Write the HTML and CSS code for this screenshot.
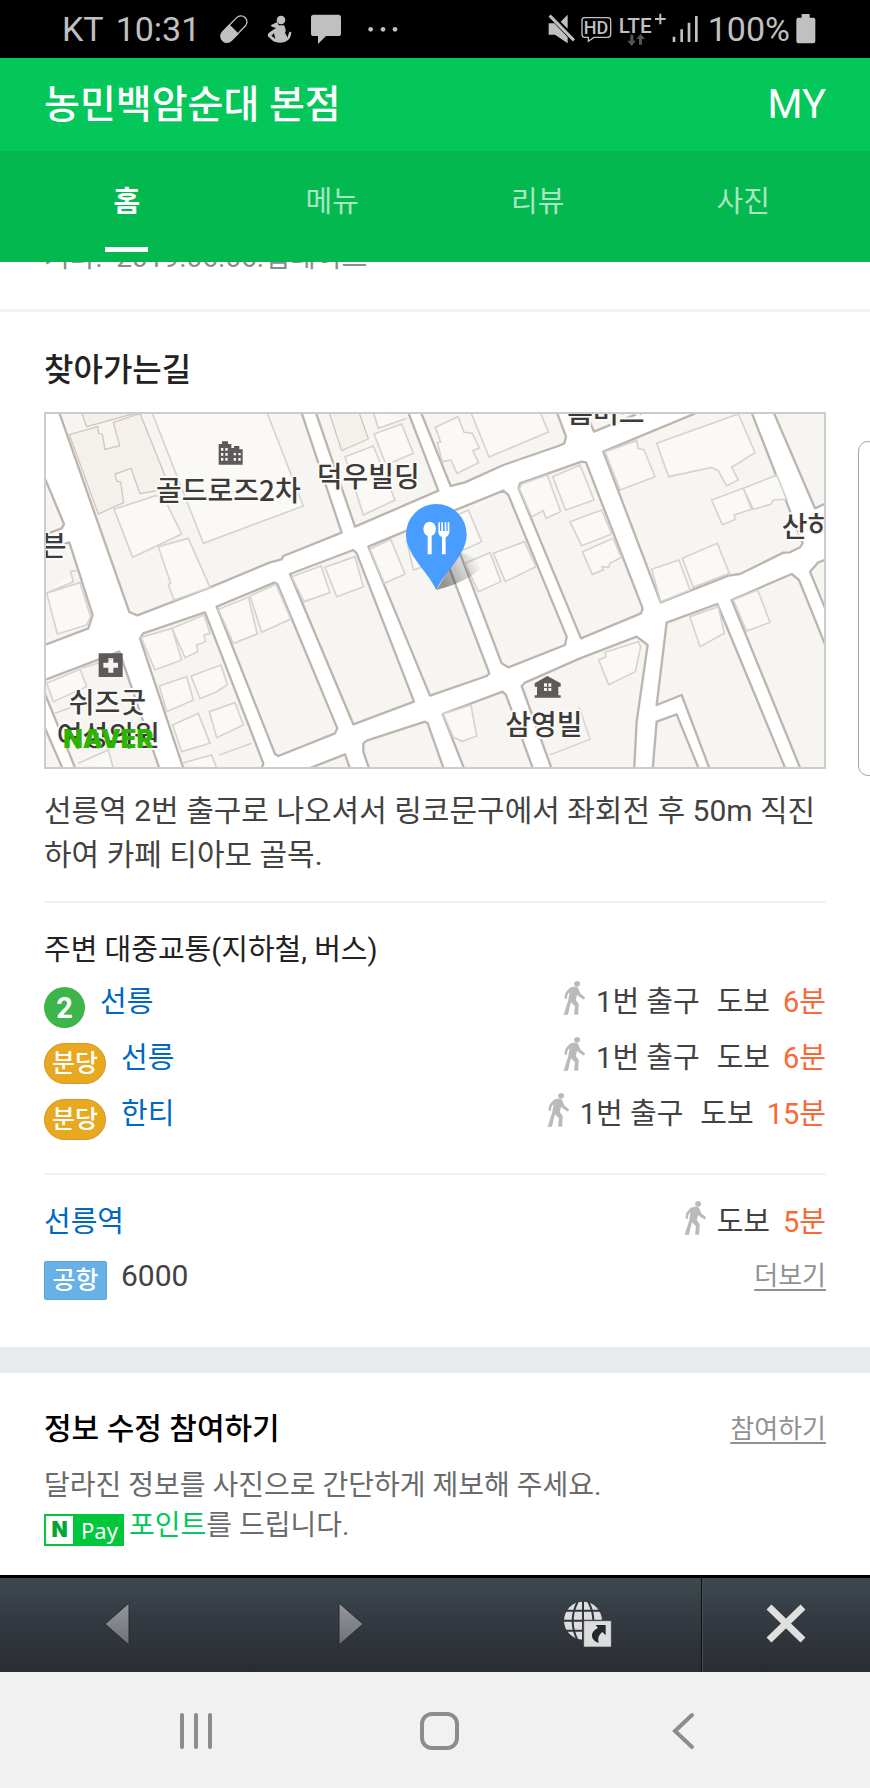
FILE: index.html
```
<!DOCTYPE html>
<html lang="ko">
<head>
  <meta charset="utf-8">
  <meta name="viewport" content="width=device-width, initial-scale=1">
  <title>농민백암순대 본점</title>
  <link rel="stylesheet" href="styles.css">
</head>
<body>
  <svg class="defs" aria-hidden="true">
    <symbol id="walk" viewBox="385 632 70 108">
      <circle cx="428" cy="643" r="9"/>
      <path d="M405 655L420 651Q430 651 433 660L438 672L452 684L449 691L432 681L428 676L424 692L433 705L431 737H419L421 710L409 699L400 737H387L401 693L405 668L399 675L396 690L389 687L392 671Z"/>
    </symbol>
  </svg>

  <div class="status">
    <span class="carrier">KT</span>
    <span class="clock">10:31</span>
    <svg class="pill" width="30" height="30" viewBox="657 42 90 90"><g transform="rotate(-46 702 87)"><rect x="654" y="69" width="96" height="36" rx="18" fill="none" stroke="#c0c0c0" stroke-width="4"/><path fill="#c0c0c0" d="M702 67H672a20 20 0 0 0 0 40H702Z"/></g></svg>
    <svg class="person" width="26" height="30" viewBox="803 42 78 90"><circle cx="845" cy="60" r="13" fill="#c0c0c0"/><path d="M814 76L834 66L838 76L854 76Q862 90 857 99Q862 105 864 113L870 95L876 96Q876 118 858 125Q840 132 822 124L805 108Q804 101 812 96L830 84L818 80ZM824 100L816 107L828 116Z" fill="#c0c0c0" fill-rule="evenodd"/></svg>
    <svg class="bubble" width="30" height="30" viewBox="932 45 90 90"><path fill="#c0c0c0" d="M940 47H1014Q1022 47 1022 55V104Q1022 111 1014 111H977L953 135V111H940Q932 111 932 104V55Q932 47 940 47Z"/></svg>
    <svg class="more" width="32" height="30" viewBox="1103 42 96 90"><g fill="#c0c0c0"><circle cx="1114" cy="88" r="7"/><circle cx="1151" cy="88" r="7"/><circle cx="1187" cy="88" r="7"/></g></svg>
    <div class="status-right">
      <svg width="27" height="30" viewBox="341 42 81 90"><path fill="#c0c0c0" d="M343 70H360L400 112V130L362 104H343ZM379 65L400 44V86Z"/><path d="M346 47L419 121" stroke="#c0c0c0" stroke-width="9"/></svg>
      <svg width="31" height="30" viewBox="440 42 93 90"><path d="M451 53H520Q529 53 529 61V103Q529 112 520 112H479L462 124V112H451Q443 112 443 103V61Q443 53 451 53Z" fill="none" stroke="#c0c0c0" stroke-width="4"/><text x="448" y="103" class="hd">HD</text></svg>
      <svg width="48" height="34" viewBox="546 32 144 102"><text x="548" y="94" class="lte">LTE</text><path d="M673 37V69M657 53H689" stroke="#c0c0c0" stroke-width="6"/><path fill="#555" d="M583 100H592V118H600L587 134L574 118H583ZM609 130H618V113H627L614 98L601 113H609Z"/></svg>
      <svg width="26" height="30" viewBox="708 46 78 90"><path d="M714 114V130M737 92V130M759 72V130M781 52V130" stroke="#c0c0c0" stroke-width="8"/></svg>
      <span class="percent">100%</span>
      <svg width="20" height="30" viewBox="1085 43 60 90"><path fill="#c0c0c0" d="M1102 43H1126V54H1137Q1143 54 1143 60V125Q1143 131 1137 131H1092Q1086 131 1086 125V60Q1086 54 1092 54H1102Z"/></svg>
    </div>
  </div>

  <header class="header">
    <h1>농민백암순대 본점</h1>
    <a href="#" class="my">MY</a>
  </header>
  <nav class="tabs">
    <a href="#" class="tab on">홈</a>
    <a href="#" class="tab">메뉴</a>
    <a href="#" class="tab">리뷰</a>
    <a href="#" class="tab">사진</a>
  </nav>

  <main>
    <div class="updated"><p>기타:&nbsp; 2019.06.06.업데이트</p></div>

    <section class="way">
      <h2>찾아가는길</h2>
      <a href="#" class="map" aria-label="지도">
        <svg viewBox="48 42 2334 1058">
          <rect x="40" y="30" width="2360" height="1090" fill="#fff"/>
          <!-- blocks between the roads -->
          <g fill="#f6f5f1" stroke="#bdb5af" stroke-width="7" stroke-linejoin="round">
            <path d="M30 200L102 372L95 385L30 410Z"/>
            <path d="M30 455L118 427L188 645L175 685L30 740Z"/>
            <path d="M85 30L298 636L322 646L540 562L720 487L755 478L760 468L935 398L812 30Z"/>
            <path d="M855 30L975 380L1225 272L1132 30Z"/>
            <path d="M1170 30L1262 258L1305 247L1420 195L1585 138L1603 130L1608 110L1578 30Z"/>
            <path d="M1665 30L1692 95L1850 30Z"/>
            <path d="M1720 155L2020 30H2162L2318 430L2310 442L2280 457L2260 458L2130 522L2095 527L1892 607Z"/>
            <path d="M2228 30L2355 325L2400 305V30Z"/>
            <path d="M1015 440L1130 392L1240 345L1260 510L1378 820L1370 828L1200 887Z"/>
            <path d="M1240 345L1420 272L1435 285L1610 710L1605 735L1435 802L1415 790L1290 460Z"/>
            <path d="M1470 250L1655 185L1668 187L1838 625L1833 640L1653 715L1466 265Z"/>
            <path d="M780 522L970 450L980 460L1152 905L970 973Z"/>
            <path d="M560 620L733 548L742 552L922 985L915 1000L745 1068L735 1062Z"/>
            <path d="M330 715L340 700L525 637L700 1090L690 1120H465Z"/>
            <path d="M30 845L268 755L393 1120H142Z"/>
            <path d="M30 950L104 1120H30Z"/>
            <path d="M800 1120L945 1063L965 1120Z"/>
            <path d="M1000 1030L1010 1022L1185 965L1193 970L1246 1120H1022L1000 1055Z"/>
            <path d="M1238 942L1418 875L1428 885L1514 1120H1308Z"/>
            <path d="M1475 858L1485 848L1650 775L1820 710L1853 735L1820 965L1812 1120H1570Z"/>
            <path d="M1910 668L2062 612L2272 1120H2044L1955 885L1880 915Z"/>
            <path d="M1880 965L1940 943L2012 1120H1867Z"/>
            <path d="M2105 600L2285 522L2307 540L2400 770V1120H2317Z"/>
            <path d="M2340 515L2365 487L2400 474V660Z"/>
          </g>
          <g fill="#f4f0ec" stroke="#d3c6bf" stroke-width="4">
            <path d="M118 104L203 80L206 100L217 103L225 148L269 137L250 68L330 40L420 265L330 281L303 205L255 222L260 243L272 246L281 308L205 342Z"/>
            <path d="M152 30L170 80L315 40M895 30L935 152L1015 117L985 30Z"/>
          </g>
          <!-- buildings -->
          <g fill="#faf9f6" stroke="#d6d4d1" stroke-width="5">
            <path d="M365 35L520 430L820 318L710 35Z"/>
            <path d="M252 328L377 287L402 294L455 402L308 472Z"/>
            <path d="M385 440L475 415L540 562L432 600L415 553L422 550Z"/>
            <path d="M46 580L130 545L122 515L140 512M50 580L150 548L182 650L170 675L82 702Z"/>
            <path d="M945 170L1030 138L1095 300L1000 345ZM1032 102L1115 72L1150 160L1068 195ZM1028 30L1045 85L1130 55"/>
            <path d="M1216 82L1284 50L1302 97L1327 100L1348 144L1328 152L1346 188L1281 220L1263 180L1237 185L1222 128L1232 126Z"/>
            <path d="M1320 30L1377 171L1555 96L1528 30Z"/>
            <path d="M333 712L426 685L455 780L375 810ZM426 685L522 645L540 700L522 705L526 725L500 735L503 755L465 773Z"/>
            <path d="M388 858L470 830L490 900L410 935ZM483 828L573 795L592 854L560 875L510 896ZM428 975L505 940L540 1030L455 1055ZM538 935L615 908L640 975L560 1013ZM455 1090L545 1065L560 1105M568 1065L665 1030"/>
            <path d="M50 850L150 808L170 860L70 905ZM155 805L265 770M75 940L185 900M145 1090L235 1050L250 1105"/>
            <path d="M565 628L655 592L682 702L610 730ZM660 588L738 553L782 657L695 697Z"/>
            <path d="M785 530L873 498L900 578L822 605ZM885 502L975 470L1000 560L920 590Z"/>
            <path d="M1020 447L1082 418L1125 522L1063 550ZM1130 420L1150 510L1180 500M1270 350L1315 330L1355 425L1300 450Z"/>
            <path d="M1305 490L1380 458L1413 545L1345 575ZM1390 460L1483 425L1518 500L1426 545Z"/>
            <path d="M1475 252L1552 225L1592 335L1548 355L1540 332L1505 350L1468 265ZM1568 230L1650 195L1692 300L1607 330ZM1620 365L1715 330L1745 402L1655 437ZM1657 455L1750 415L1774 472L1740 490L1736 502L1716 500L1720 510L1687 523Z"/>
            <path d="M1725 155L1820 122L1824 145L1842 150L1875 230L1770 270ZM1880 130L2125 42L2175 158L2105 202L2125 240L2090 258L2065 212L2045 202L1916 230Z"/>
            <path d="M2045 300L2140 265L2165 328L2112 345L2117 358L2077 374ZM2140 265L2240 225L2270 298L2230 300L2222 313L2170 328ZM1865 508L1947 480L1980 570L1892 605ZM1957 475L2062 430L2098 520L1990 562Z"/>
            <path d="M1706 780L1728 770L1725 757L1825 725L1832 740L1816 815L1736 854ZM1980 650L2065 620L2083 700L2010 740ZM2110 600L2183 570L2220 667L2150 693ZM1240 942L1323 915L1340 1008L1297 1024L1270 1012Z"/>
          </g>
          <path d="M1560 1065L1680 1018L1648 922" fill="none" stroke="#dccfc8" stroke-width="4"/>

          <!-- places -->
          <g fill="#5c5a5a">
            <path fill-rule="evenodd" d="M566 132H576V124H594V132H604V144H612V138H628V148H638V194H566ZM573 144V152H580V144ZM586 144V152H593V144ZM573 159V167H580V159ZM586 159V167H593V159ZM573 174V182H580V174ZM586 174V182H593V174ZM611 159V166H618V159ZM625 159V166H632V159ZM611 174V182H618V174ZM625 174V182H632V174Z"/>
            <path fill-rule="evenodd" d="M206 760H278V831H206ZM235 774V788H220V803H235V818H250V803H264V788H250V774Z"/>
            <path fill-rule="evenodd" d="M1552 828L1592 850V860H1585V886H1592V893H1514V886H1521V860H1514V850ZM1542 850V860H1551V850ZM1555 850V860H1564V850ZM1542 864V873H1551V864ZM1555 864V873H1564V864Z"/>
          </g>
          <g class="place">
            <text x="378" y="304">골드로즈2차</text>
            <text x="860" y="262">덕우빌딩</text>
            <text x="32" y="467">븐</text>
            <text x="116" y="940">쉬즈굿</text>
            <text x="80" y="1039">여성의원</text>
            <text x="1426" y="1006">삼영빌</text>
            <text x="2255" y="411">산하</text>
            <text x="1612" y="70">홈버스</text>
          </g>
          <text x="100" y="1045" class="naver">NAVER</text>

          <!-- pin -->
          <defs><linearGradient id="shade" gradientUnits="userSpaceOnUse" x1="1240" y1="550" x2="1350" y2="485"><stop offset="0" stop-color="#000" stop-opacity=".4"/><stop offset="1" stop-color="#000" stop-opacity="0"/></linearGradient></defs>
          <path d="M1219 570L1290 455L1370 490Q1320 545 1219 570Z" fill="url(#shade)"/>
          <path d="M1219 570C1190 510 1128 465 1128 403A91 91 0 0 1 1310 403C1310 465 1248 510 1219 570Z" fill="#489dff"/>
          <g fill="#fff"><ellipse cx="1199" cy="387" rx="19" ry="22"/><path d="M1193 400H1205V463H1193ZM1225 367H1230V393H1234V367H1239V393H1244V367H1249V393H1253V367H1258V395Q1258 407 1247 411V463H1236V411Q1225 407 1225 395Z"/></g>
        </svg>
      </a>
      <p class="guide">선릉역 2번 출구로 나오셔서 링코문구에서 좌회전 후 50m 직진하여 카페 티아모 골목.</p>

      <div class="transit">
        <h3>주변 대중교통(지하철, 버스)</h3>
        <ul>
          <li><span class="line line2">2</span><a href="#">선릉</a><span class="walk"><svg><use href="#walk"/></svg><span>1번 출구</span><span>도보</span><em>6분</em></span></li>
          <li><span class="line bundang">분당</span><a href="#">선릉</a><span class="walk"><svg><use href="#walk"/></svg><span>1번 출구</span><span>도보</span><em>6분</em></span></li>
          <li><span class="line bundang">분당</span><a href="#">한티</a><span class="walk"><svg><use href="#walk"/></svg><span>1번 출구</span><span>도보</span><em>15분</em></span></li>
        </ul>
      </div>

      <div class="bus">
        <div class="stop"><a href="#">선릉역</a><span class="walk"><svg><use href="#walk"/></svg><span>도보</span><em>5분</em></span></div>
        <div class="route"><span class="airport">공항</span><span class="number">6000</span><a href="#" class="link">더보기</a></div>
      </div>
    </section>

    <section class="edit">
      <div class="edit-head"><h2>정보 수정 참여하기</h2><a href="#" class="link">참여하기</a></div>
      <p>달라진 정보를 사진으로 간단하게 제보해 주세요.</p>
      <p class="point"><span class="npay"><b>N</b><span>Pay</span></span><span><strong>포인트</strong>를 드립니다.</span></p>
    </section>
  </main>

  <div class="toolbar">
    <button aria-label="뒤로"><svg width="30" height="50" viewBox="0 0 30 50"><path d="M27 3V45L3 24Z" fill="url(#metal)" stroke="#262b30"/></svg></button>
    <button aria-label="앞으로"><svg width="30" height="50" viewBox="0 0 30 50"><defs><linearGradient id="metal" x2="0" y2="1"><stop stop-color="#95999d"/><stop offset="1" stop-color="#6d7175"/></linearGradient></defs><path d="M3 3V45L27 24Z" fill="url(#metal)" stroke="#262b30"/></svg></button>
    <button aria-label="브라우저로 열기">
      <svg width="50" height="50" viewBox="373 119 150 150" overflow="visible">
        <circle cx="445" cy="181" r="57" fill="#ddd"/>
        <path d="M445 122V240M387 181H503M394 151H496M394 211H496M429 124Q399 181 429 240M461 124Q491 181 461 240" fill="none" stroke="#30363c" stroke-width="6"/>
        <path d="M447 181H530V260H447Z" fill="#ddd" stroke="#30363c" stroke-width="2"/>
        <path d="M483 194H513V225L503 215Q487 226 492 248Q469 240 472 222Q475 210 490 203Z" fill="#22292e"/>
      </svg>
    </button>
    <button class="close" aria-label="닫기"><svg width="42" height="42" viewBox="0 0 42 42"><path d="M4 3L38 36M38 3L4 36" stroke="#e0e0e0" stroke-width="7"/></svg></button>
  </div>
  <div class="softkeys">
    <button aria-label="최근 앱"><svg width="40" height="40" viewBox="0 0 40 40"><path d="M6 5V37M20 5V37M34 5V37"/></svg></button>
    <button aria-label="홈 화면"><svg width="42" height="42" viewBox="0 0 42 42"><rect x="3" y="5" width="35" height="34" rx="10"/></svg></button>
    <button aria-label="이전"><svg width="24" height="40" viewBox="0 0 24 40"><path d="M20 5L3 21L20 37"/></svg></button>
  </div>
  <div class="edge"></div>
</body>
</html>
```
FILE: styles.css
```
* {
  box-sizing: border-box;
}
body {
  position: relative;
  margin: 0;
  min-height: 100vh;
  display: flex;
  flex-direction: column;
  overflow-x: hidden;
  background: #fff;
  color: #424242;
  font: 30px/44px Roboto, "Noto Sans CJK KR", sans-serif;
}
h1, h2, h3, p, ul {
  margin: 0;
  padding: 0;
}
ul {
  list-style: none;
}
a {
  color: #0068c3;
  text-decoration: none;
}
svg {
  display: block;
}
button {
  display: flex;
  align-items: center;
  justify-content: center;
  padding: 0;
  border: 0;
  background: none;
}
.defs {
  position: absolute;
  width: 0;
  height: 0;
}

/* phone status bar */
.status {
  display: flex;
  align-items: center;
  height: 58px;
  padding: 0 54px 0 62px;
  background: #000;
  color: #c0c0c0;
  font-size: 34px;
}
.clock {
  margin: 0 19px 0 12px;
}
.person {
  margin: 0 18px;
}
.more {
  margin-left: 26px;
}
.status-right {
  display: flex;
  align-items: center;
  gap: 6px;
  margin-left: auto;
}
.percent {
  margin-left: 4px;
}
.hd {
  font: 500 54px Roboto, sans-serif;
  fill: #c0c0c0;
}
.lte {
  font: 500 62px Roboto, sans-serif;
  fill: #c0c0c0;
}

.header {
  display: flex;
  align-items: center;
  justify-content: space-between;
  height: 93px;
  padding: 0 44px;
  background: #04c75a;
}
h1 {
  color: #fff;
  font-size: 39px;
  font-weight: 500;
}
.my {
  color: #fff;
  font-size: 40px;
}
.tabs {
  display: flex;
  height: 111px;
  padding: 0 24px;
  background: #04b850;
}
.tab {
  flex: 1;
  display: flex;
  flex-direction: column;
  align-items: center;
  padding-top: 29px;
  color: rgba(255, 255, 255, .66);
  font-size: 29px;
}
.tab.on {
  color: #fff;
  font-weight: 700;
}
.tab.on::after {
  content: "";
  width: 43px;
  height: 5px;
  margin-top: 23px;
  background: #fff;
}

main {
  flex: 1;
}
/* last line of the block that is scrolled under the tabs */
.updated {
  display: flex;
  align-items: flex-end;
  height: 50px;
  padding: 0 44px 29px;
  overflow: hidden;
  border-bottom: 3px solid #f2f2f2;
  color: #8c8c8c;
  font-size: 28px;
}
.way {
  padding: 36px 44px 47px;
}
h2 {
  color: #222;
  font-size: 32px;
  font-weight: 500;
}
.map {
  display: block;
  margin: 20px 0;
  border: 2px solid #ccc;
}
.map svg {
  width: 100%;
}
.place text {
  font: 500 84px "Noto Sans CJK KR", sans-serif;
  fill: #3c3a3a;
  stroke: #fbfaf7;
  stroke-width: 12px;
  stroke-linejoin: round;
  paint-order: stroke;
}
.naver {
  font: 900 76px Inter, sans-serif;
  fill: #2db400;
}
.guide {
  word-break: break-all;
}
.transit {
  margin-top: 24px;
  padding: 25px 0;
  border-top: 2px solid #f0f1f4;
  font-size: 29px;
}
h3 {
  color: #222;
  font-size: 29px;
  font-weight: 400;
}
.transit ul {
  margin-top: 8px;
}
.transit li {
  display: flex;
  height: 56px;
}
.line {
  height: 41px;
  margin: 7px 15px 0 0;
  border-radius: 21px;
  color: #fff;
  text-align: center;
}
.line2 {
  width: 41px;
  background: #3db54a;
  font: 700 29px/42px Roboto, sans-serif;
}
.bundang {
  width: 62px;
  border: 1px solid #d0982a;
  background: #e8a920;
  font-size: 25px;
  font-weight: 500;
  line-height: 40px;
}
.walk {
  display: flex;
  margin-left: auto;
}
.walk svg {
  width: 23px;
  height: 36px;
  margin-right: 10px;
  fill: #b8bbba;
}
.walk span {
  margin-right: 13px;
}
.walk span + span {
  margin-left: 4px;
}
.walk em {
  color: #fc6736;
  font-style: normal;
}
.bus {
  padding-top: 25px;
  border-top: 2px solid #f2f2f2;
}
.stop {
  display: flex;
  font-size: 29px;
}
.route {
  display: flex;
  margin-top: 10px;
}
.airport {
  width: 63px;
  height: 39px;
  margin: 7px 14px 0 0;
  border: 1px solid #5ba3d8;
  border-radius: 2px;
  background: #67b1e6;
  color: #fff;
  font-size: 25px;
  font-weight: 500;
  line-height: 38px;
  text-align: center;
}
.link {
  margin-left: auto;
  color: #919191;
  font-size: 26px;
  text-decoration: underline;
  text-decoration-thickness: 2px;
  text-underline-offset: 4px;
}

.edit {
  padding: 36px 44px 20px;
  border-top: 26px solid #e7ebee;
  color: #6b6b6b;
  font-size: 28px;
  line-height: 40px;
}
.edit-head {
  display: flex;
  margin-bottom: 17px;
}
.edit h2 {
  color: #000;
  font-size: 30px;
}
.point {
  display: flex;
}
.point strong {
  color: #04c75a;
  font-weight: 400;
}
.npay {
  display: flex;
  width: 80px;
  height: 32px;
  margin: 8px 5px 0 0;
  border: 2px solid #00c73c;
  background: #00c73c;
  color: #fff;
  font: 22px/28px "Noto Sans", sans-serif;
}
.npay b {
  width: 27px;
  margin-right: 8px;
  background: #fff;
  color: #00a832;
  font: 900 21px/28px Inter, sans-serif;
  text-align: center;
}

/* in-app browser bar */
.toolbar {
  display: flex;
  height: 97px;
  border-top: 3px solid #000;
  background: linear-gradient(#3d494f, #353b43 40%, #292d31);
}
.toolbar button {
  flex: 1;
}
.toolbar .close {
  flex: 0 0 169px;
  border-left: 1px solid #111;
  box-shadow: inset 1px 0 #454c52;
}
.softkeys {
  display: flex;
  height: 116px;
  padding: 0 64px 0 74px;
  background: #f1f1f1;
}
.softkeys button {
  flex: 1;
}
.softkeys svg {
  fill: none;
  stroke: #8c8c8c;
  stroke-width: 4;
  stroke-linecap: round;
}
/* edge panel handle, half off the screen */
.edge {
  position: absolute;
  top: 441px;
  right: -8px;
  width: 20px;
  height: 335px;
  border: 1px solid #a5a5a5;
  border-radius: 12px;
  background: #fff;
  clip-path: inset(0 8px 0 0);
}
```
